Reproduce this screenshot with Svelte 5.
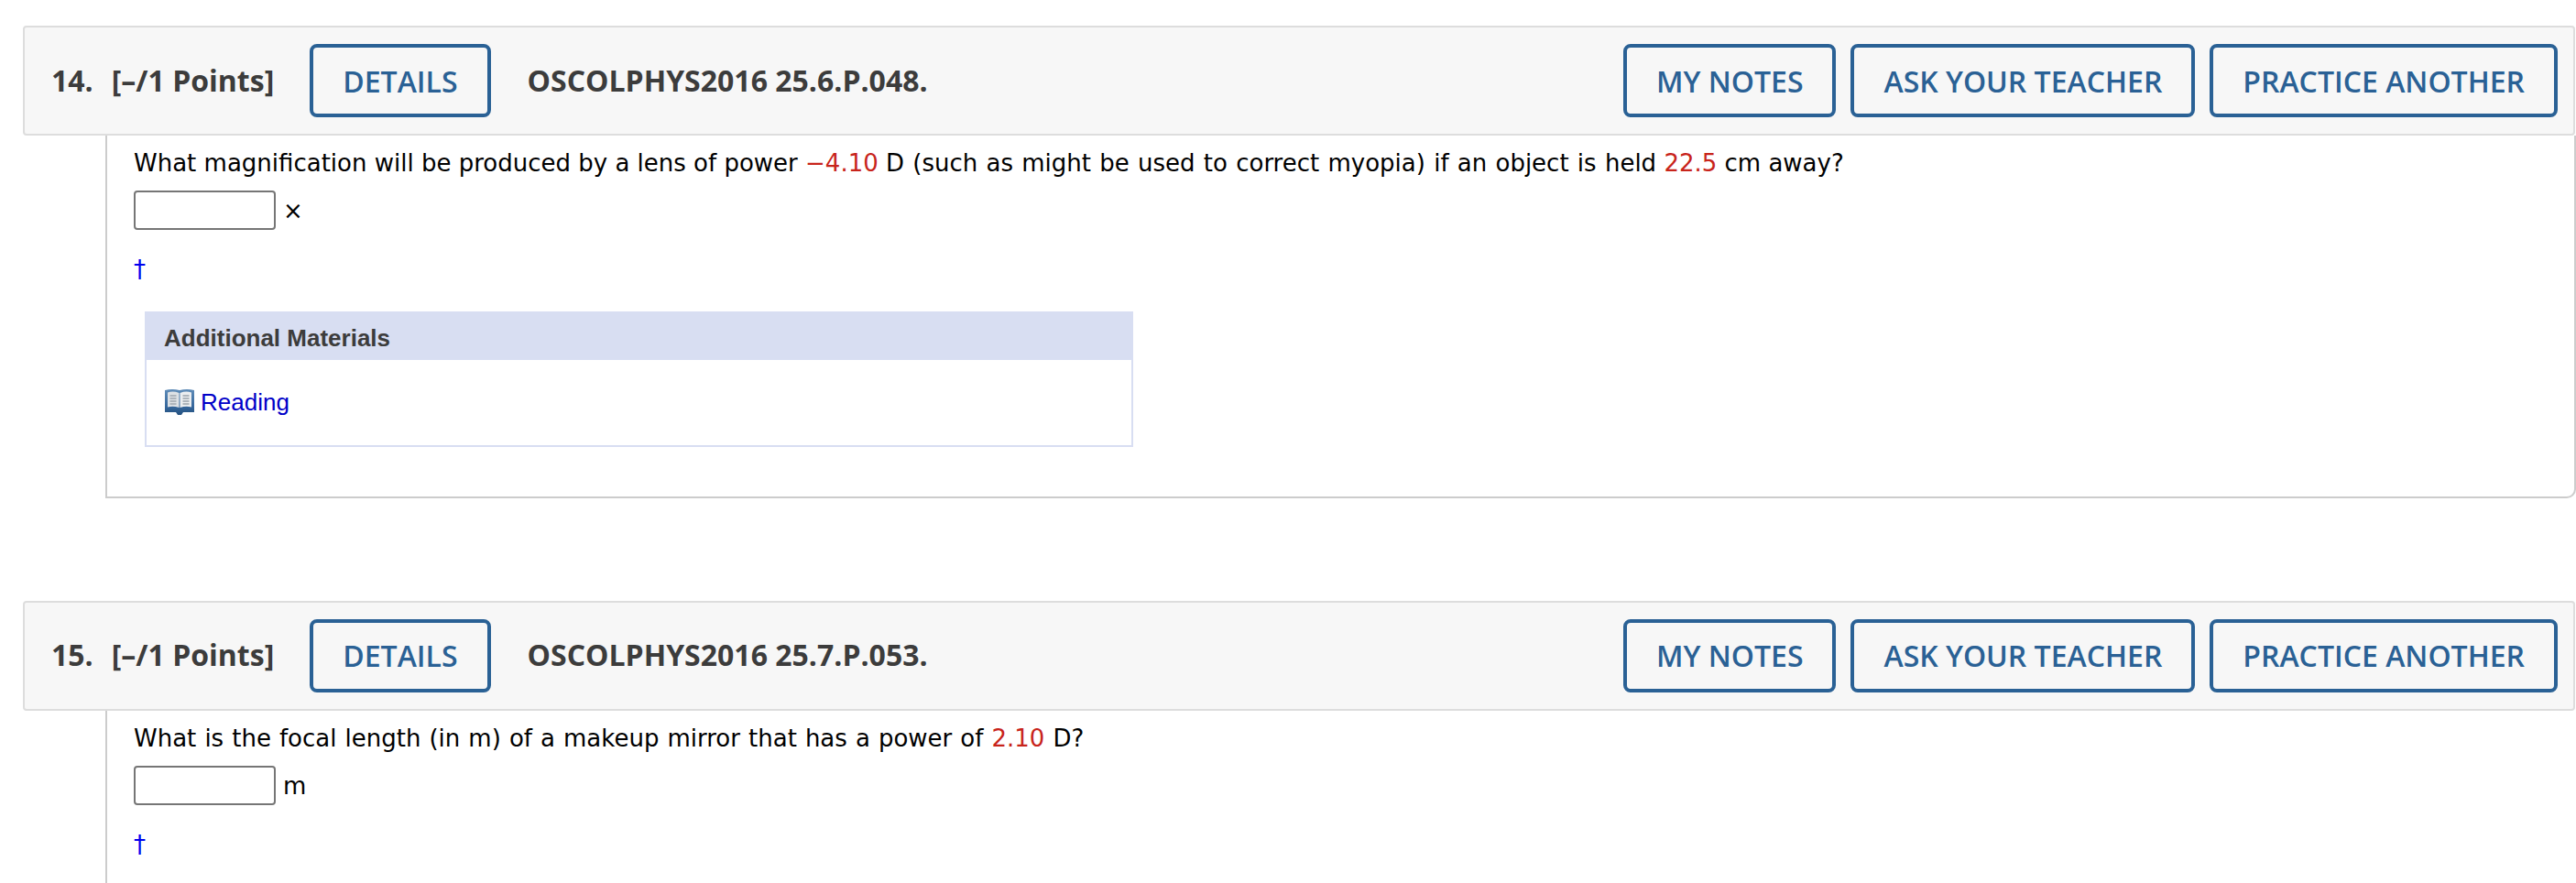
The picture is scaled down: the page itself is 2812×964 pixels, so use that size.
<script>
  const actions = ['MY NOTES', 'ASK YOUR TEACHER', 'PRACTICE ANOTHER'];
</script>

{#snippet head(num, code)}
  <header class="head">
    <strong class="num">{num}.</strong>
    <strong class="pts">[–/1 Points]</strong>
    <button class="btn details">DETAILS</button>
    <strong class="code">{code}</strong>
    <div class="actions">
      {#each actions as a}
        <button class="btn">{a}</button>
      {/each}
    </div>
  </header>
{/snippet}

<main class="page">
  <section class="q first">
    {@render head(14, 'OSCOLPHYS2016 25.6.P.048.')}
    <div class="body closed">
      <p class="text">What magnification will be produced by a lens of power <span class="red">−4.10</span> <span class="wide">D (such as might be used to correct myopia) if an object is held</span> <span class="red">22.5</span> cm away?</p>
      <div class="answer"><span class="input"></span><span class="unit">×</span></div>
      <div class="dagger">†</div>
      <div class="materials">
        <div class="mat-head"><span class="mat-title">Additional Materials</span></div>
        <div class="mat-body">
          <svg class="book" viewBox="0 0 32 28" width="32" height="28" aria-hidden="true">
            <defs>
              <linearGradient id="cover" x1="0" y1="0" x2="0" y2="1">
                <stop offset="0" stop-color="#5f8cb8"/>
                <stop offset="0.7" stop-color="#34659a"/>
                <stop offset="1" stop-color="#24507f"/>
              </linearGradient>
            </defs>
            <path d="M0 1 Q8 -1 16 1 Q24 -1 32 1 V25 H20 L18 28 H14 L12 25 H0 Z" fill="url(#cover)"/>
            <path d="M3 3.5 Q9 1.5 15.5 4 V20 Q9 18 3 19.5 Z" fill="#dde1e5"/>
            <path d="M16.5 4 Q23 1.5 29 3.5 V19.5 Q23 18 16.5 20 Z" fill="#eceef0"/>
            <path d="M5.5 7h7M5.5 10h7M5.5 13h7M5.5 16h7M19.5 7h7M19.5 10h7M19.5 13h7M19.5 16h7" stroke="#aeb5bc" stroke-width="1.8"/>
          </svg>
          <a href="#reading" class="link">Reading</a>
        </div>
      </div>
    </div>
  </section>
  <section class="q second">
    {@render head(15, 'OSCOLPHYS2016 25.7.P.053.')}
    <div class="body grow">
      <p class="text wide2">What is the focal length (in m) of a makeup mirror that has a power of <span class="red">2.10</span> D?</p>
      <div class="answer"><span class="input"></span><span class="unit">m</span></div>
      <div class="dagger">†</div>
    </div>
  </section>
</main>

<style>
  :global(body) { margin: 0; background: #fff; overflow: hidden; }
  .page { width: 2812px; height: 964px; overflow: hidden; padding-top: 28px; box-sizing: border-box; display: flex; flex-direction: column; }
  .q { display: flex; flex-direction: column; }
  .second { margin-top: 112px; flex: 1; }
  .head {
    flex: none; margin-left: 25px; margin-right: 1px; height: 120px; box-sizing: border-box;
    display: flex; align-items: center; padding-left: 29px; padding-right: 17px; padding-bottom: 2px;
    background: #f7f7f7; border: 2px solid #ddd; border-radius: 4px;
    font-family: "Open Sans", sans-serif; font-size: 32px; color: #3c3c3c;
  }
  .second .head { padding-bottom: 4px; }
  .num, .pts, .code { font-weight: 700; white-space: nowrap; }
  .pts { margin-left: 20px; }
  .code { margin-left: 40px; }
  .btn {
    height: 80px; padding: 0 32px; box-sizing: border-box;
    background: transparent; border: 4px solid #2a6195; border-radius: 8px;
    font: 600 32px "Open Sans", sans-serif; color: #2a6195; white-space: nowrap;
    margin-bottom: -2px;
  }
  .second .btn { margin-bottom: -4px; padding-bottom: 2px; }
  .details { margin-left: 39px; }
  .actions { margin-left: auto; display: flex; gap: 16px; }
  .body {
    margin-left: 115px; padding: 0 0 0 29px; border-left: 2px solid #ccc;
    font-family: "DejaVu Sans", sans-serif; font-size: 26px; color: #000;
  }
  .grow { flex: 1; }
  .closed { height: 396px; box-sizing: border-box; border-bottom: 2px solid #ccc; border-right: 2px solid #ccc; border-bottom-right-radius: 10px; }
  .text { margin: 0; padding-top: 11px; line-height: 38px; white-space: nowrap; }
  .wide { word-spacing: 1px; }
  .wide2 { word-spacing: 0.8px; }
  .red { color: #c8241b; }
  .answer { display: flex; align-items: center; margin-top: 11px; }
  .input { width: 155px; height: 43px; box-sizing: border-box; background: #fff; border: 2px solid #767676; border-radius: 4px; }
  .unit { margin-left: 8px; }
  .dagger { margin-top: 24px; color: #0000ee; line-height: 38px; }
  .materials { margin: 27px 0 0 12px; width: 1079px; border: 2px solid #d8def2; border-top: 0; box-sizing: border-box; }
  .mat-head {
    margin: 0 -2px; height: 53px; padding-left: 21px; display: flex; align-items: center;
    background: #d8def2; font: 700 26px "Liberation Sans", sans-serif; color: #3c3c3c;
  }
  .mat-title { padding-top: 5px; }
  .mat-body { height: 93px; display: flex; align-items: center; padding-left: 20px; gap: 7px; }
  .book { margin-top: -2px; }
  .link { font: 26px "Liberation Sans", sans-serif; color: #0000c8; text-decoration: none; }
</style>
